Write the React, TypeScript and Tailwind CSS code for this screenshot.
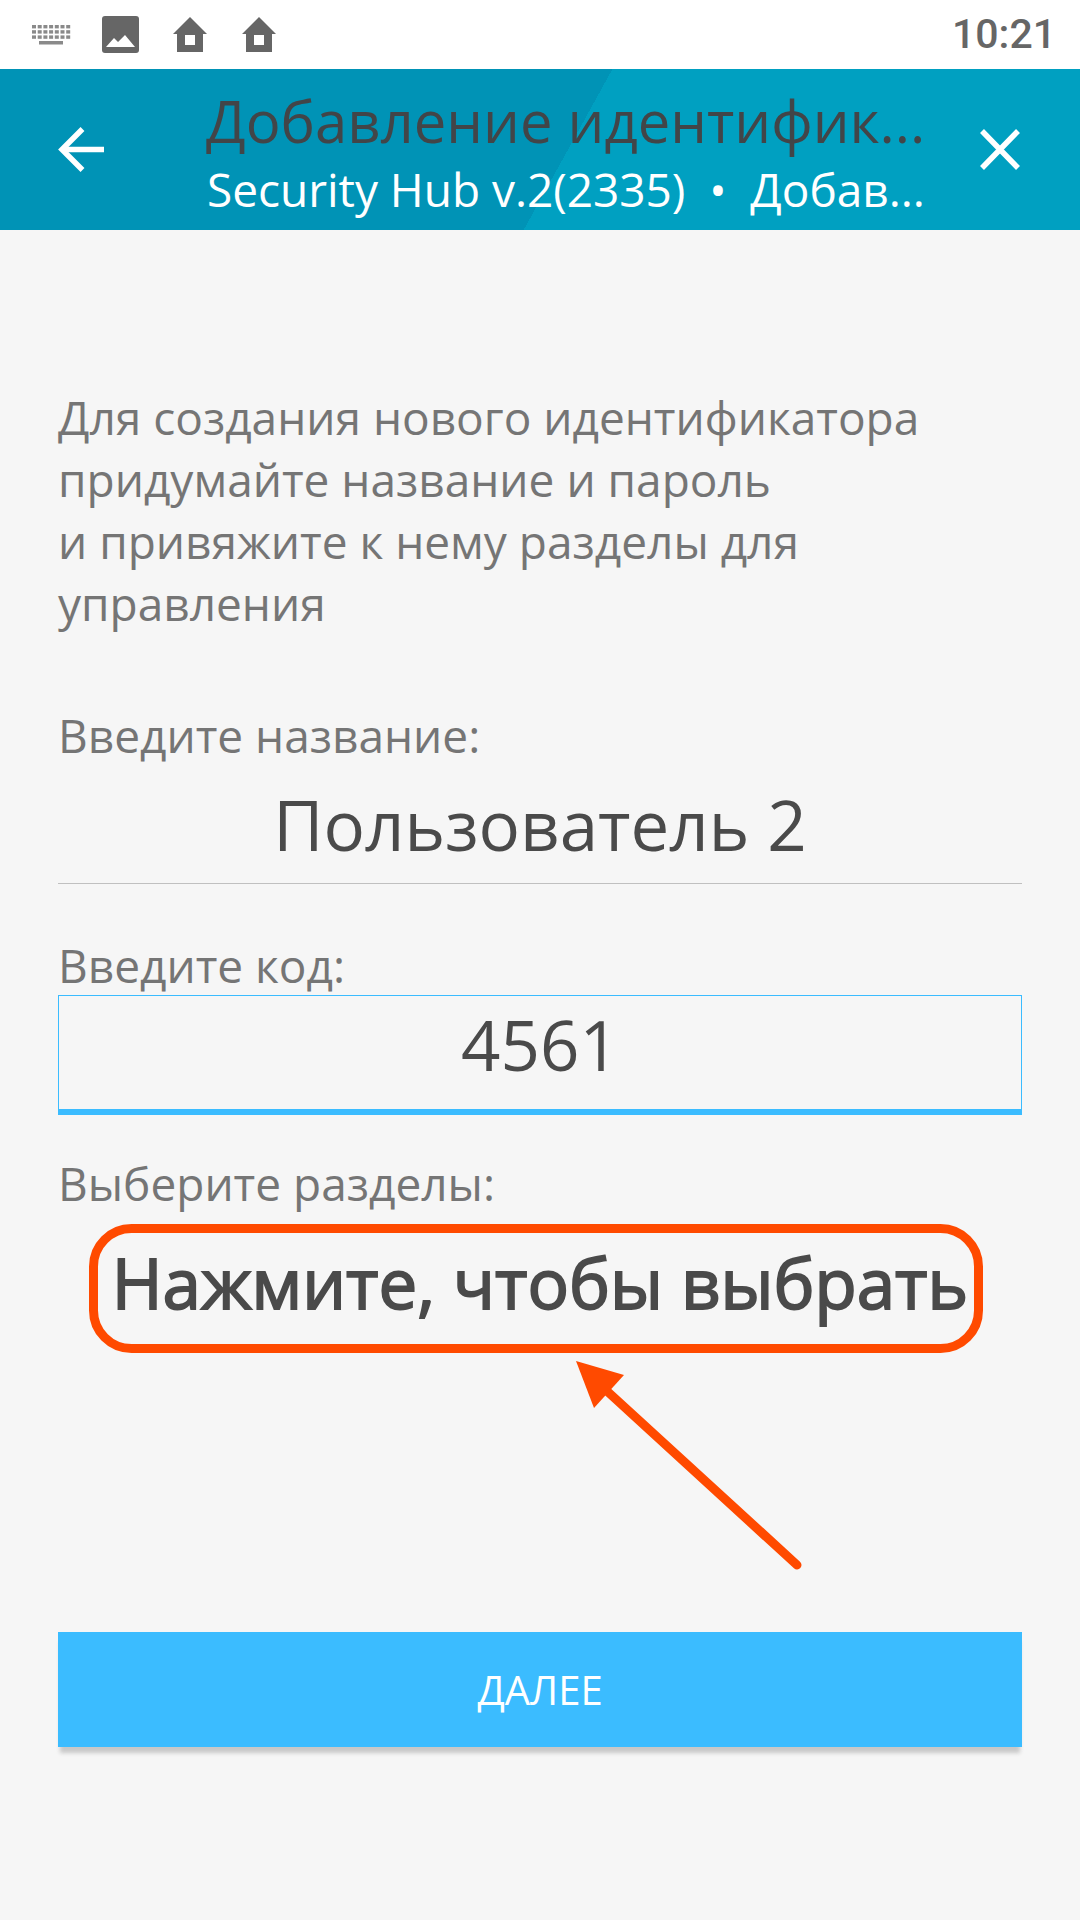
export default function App() {
  const dots = [];
  for (let r = 0; r < 3; r++) {
    for (let c = 0; c < 7; c++) {
      dots.push(<rect key={`${r}-${c}`} x={1 + c * 5.7} y={1 + r * 5.2} width={4} height={3.4} fill="#8a8a8a" />);
    }
  }
  const home = (
    <svg width="34" height="35" viewBox="0 0 34 35" className="block">
      <path fillRule="evenodd" d="M17 0 L34 17 L30 17 L30 35 L4 35 L4 17 L0 17 Z M12 18 L12 28 L22 28 L22 18 Z" fill="#666666" />
    </svg>
  );
  return (
    <div className="relative flex h-[1920px] w-[1080px] flex-col overflow-hidden bg-[#f6f6f6] font-['Open_Sans',sans-serif]">
      {/* status bar */}
      <div className="flex h-[69px] shrink-0 items-center bg-white pl-[31px] pr-[24px]">
        <svg width="41" height="21" viewBox="0 0 41 21" className="block" style={{ filter: "blur(0.5px)" }}>
          {dots}
          <rect x="8" y="17" width="24" height="3.5" fill="#8a8a8a" />
        </svg>
        <svg width="37" height="37" viewBox="0 0 37 37" className="ml-[30px] block">
          <rect width="37" height="37" rx="3" fill="#666666" />
          <path d="M4 31 L12 22 L16 26 L23 19 L33 31 Z" fill="#ffffff" />
        </svg>
        <div className="ml-[34px]">{home}</div>
        <div className="ml-[35px]">{home}</div>
        <span className="ml-auto font-['Roboto',sans-serif] text-[41px] font-medium leading-none text-[#666666]">10:21</span>
      </div>

      {/* header */}
      <div className="flex h-[161px] shrink-0 items-center bg-[linear-gradient(118.9deg,#0093b6_0%,#0093b6_52.4%,#00a0c1_52.4%,#00a0c1_100%)]">
        <svg width="46" height="45" viewBox="0 0 46 45" fill="none" stroke="#ffffff" strokeWidth="5.5" className="ml-[58px] block shrink-0">
          <path d="M46 22.5 H4" />
          <path d="M24.5 2 L4 22.5 L24.5 43" />
        </svg>
        <div className="ml-[102px] flex w-[720px] shrink-0 flex-col pt-[5px]">
          <div className="h-[70px] whitespace-nowrap text-[58px] leading-[70px] text-[#424548]">Добавление идентифик...</div>
          <div className="ml-[1px] mt-[3px] h-[60px] whitespace-nowrap text-[46px] leading-[60px] tracking-[-0.03px] text-white">Security Hub v.2(2335) &nbsp;•&nbsp; Добав...</div>
        </div>
        <svg width="40" height="41" viewBox="0 0 40 41" fill="none" stroke="#ffffff" strokeWidth="5.5" className="ml-[54px] block shrink-0">
          <path d="M2 2 L38 39 M38 2 L2 39" />
        </svg>
      </div>

      {/* content */}
      <div className="flex flex-1 flex-col px-[58px] pt-[156px]">
        <p className="text-[46px] leading-[62px] text-[#757575]">
          Для создания нового идентификатора
          <br />
          придумайте название и пароль
          <br />
          и привяжите к нему разделы для
          <br />
          управления
        </p>

        <div className="mt-[70px] text-[46px] leading-[62px] text-[#757575]">Введите название:</div>
        <div className="mt-[13px] border-b-[1px] border-[#c0c0c0] pb-[14px] text-center text-[69px] leading-[90px] text-[#4a4a4a]">Пользователь 2</div>

        <div className="mt-[50px] text-[46px] leading-[62px] text-[#757575]">Введите код:</div>
        <div className="mt-[-1px] box-border h-[120px] border border-b-[6px] border-[#3bbcff] pt-[3px] text-center text-[69px] leading-[90px] text-[#4a4a4a]">4561</div>

        <div className="mt-[37px] text-[46px] leading-[62px] text-[#757575]">Выберите разделы:</div>
        <div className="mt-[23px] text-center text-[69px] leading-[90px] text-[#4a4a4a] [-webkit-text-stroke:1.8px_#4a4a4a]">Нажмите, чтобы выбрать</div>

        <div className="mt-[305px] flex h-[115px] items-center justify-center bg-[#3bbcff] text-[40px] text-white shadow-[0_8px_4px_-2px_#c8c8c8]">ДАЛЕЕ</div>
      </div>

      {/* annotation overlay */}
      <svg width="1080" height="1920" viewBox="0 0 1080 1920" fill="none" className="pointer-events-none absolute left-0 top-0">
        <rect x="93.5" y="1228.5" width="885" height="120" rx="38" stroke="#ff4a00" strokeWidth="9" />
        <path d="M797 1565 L608 1392" stroke="#ff4a00" strokeWidth="9" strokeLinecap="round" />
        <path d="M576 1361 L624 1375 L594 1408 Z" fill="#ff4a00" />
      </svg>
    </div>
  );
}
